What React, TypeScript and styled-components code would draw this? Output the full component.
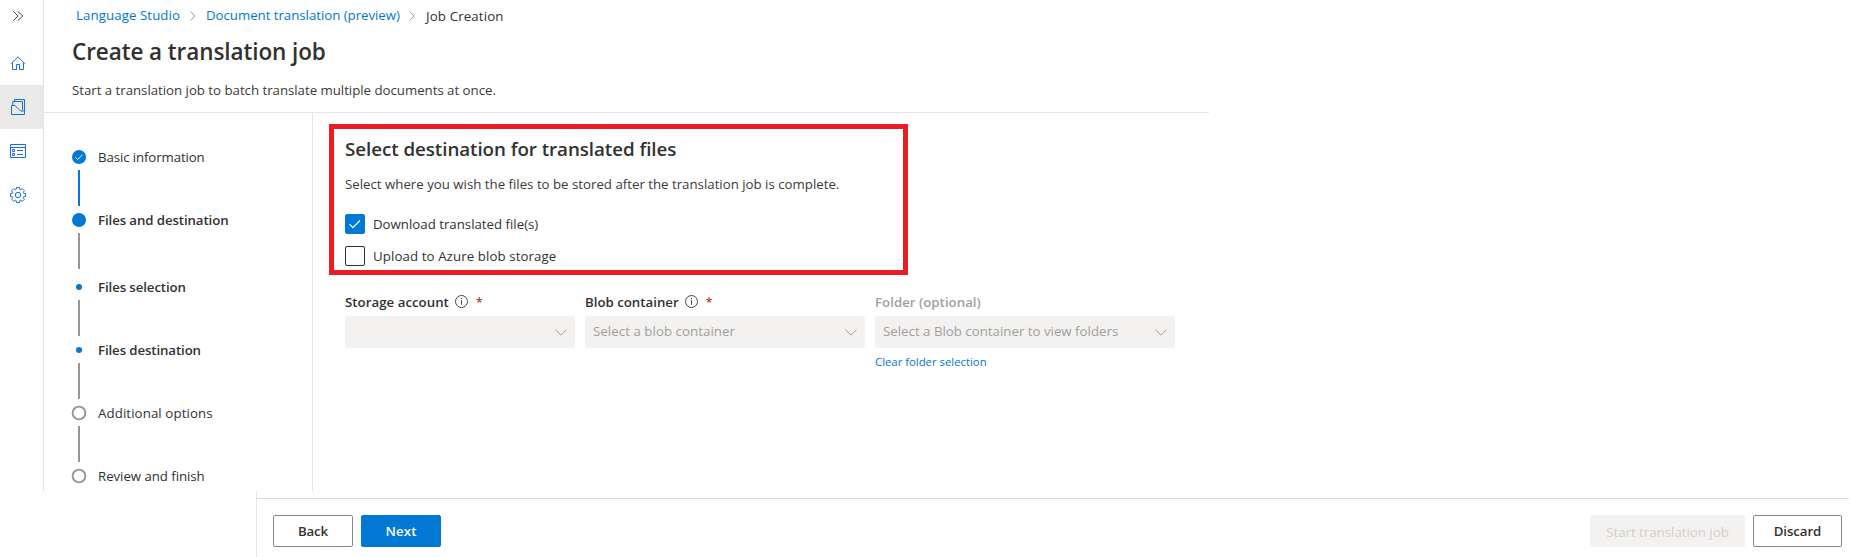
import React from 'react';
import styled, { createGlobalStyle, css } from 'styled-components';

const blue = '#0078d4';
const ink = '#323130';
const hairline = '#e6e6e6';

const GlobalStyle = createGlobalStyle`
  *, *::before, *::after { box-sizing: border-box; }
  body {
    margin: 0;
    background: #fff;
    color: ${ink};
    font: 400 13.25px/20px "Open Sans", "Segoe UI", sans-serif;
    overflow: hidden;
  }
  svg { display: block; flex: none; }
  h1, h2, p { margin: 0; }
`;

const Screen = styled.div`
  display: flex;
  flex-direction: column;
  width: 1850px;
  height: 557px;
`;

const Workspace = styled.div`
  display: flex;
  height: 491px;
`;

const Rail = styled.nav`
  width: 44px;
  flex: none;
  border-right: 1px solid ${hairline};
`;

const RailToggle = styled.button`
  display: flex;
  align-items: center;
  width: 43px;
  height: 32px;
  margin: 0 0 9px;
  padding: 0 0 0 8px;
  border: 0;
  background: none;
`;

const RailItem = styled.a<{ $active?: boolean }>`
  display: flex;
  align-items: center;
  height: 44px;
  padding-left: 8px;
  background: ${p => (p.$active ? '#ebeae9' : 'transparent')};
`;

const Main = styled.main`
  display: flex;
  flex-direction: column;
  flex: 1;
`;

const Header = styled.header`
  width: 1165px;
  height: 113px;
  padding: 5px 0 0 28px;
  border-bottom: 1px solid ${hairline};
`;

const Breadcrumb = styled.div`
  display: flex;
  height: 21px;
  margin-left: 4px;
`;

const Crumb = styled.a<{ $width: number; $track: number }>`
  width: ${p => p.$width}px;
  letter-spacing: ${p => p.$track}px;
  color: ${blue};
  white-space: nowrap;
`;

const CurrentCrumb = styled.span`
  padding: 1px 0 0 1px;
  letter-spacing: 0.15px;
`;

const CrumbChevron = styled.svg`
  margin: 6px 9px 0 9px;
`;

const Title = styled.h1`
  margin-top: 10px;
  font-size: 22.5px;
  font-weight: 600;
  line-height: 32px;
  letter-spacing: -0.09px;
`;

const Subtitle = styled.p`
  margin-top: 12px;
  letter-spacing: -0.02px;
  color: #3b3a39;
`;

const Body = styled.div`
  display: flex;
  flex: 1;
`;

const Steps = styled.div`
  width: 269px;
  flex: none;
  padding: 34px 0 0 28px;
  border-right: 1px solid ${hairline};
`;

const Step = styled.div<{ $bold?: boolean; $track: number }>`
  display: flex;
  align-items: center;
  height: 20px;
  font-weight: ${p => (p.$bold ? 600 : 400)};
  letter-spacing: ${p => p.$track}px;
`;

const Marker = styled.span`
  display: flex;
  align-items: center;
  justify-content: center;
  width: 14px;
  margin-right: 12px;
`;

const Disc = styled.span<{ $size: number }>`
  width: ${p => p.$size}px;
  height: ${p => p.$size}px;
  border-radius: 50%;
  background: ${blue};
`;

const Connector = styled.div<{ $done?: boolean; $gap?: number }>`
  width: 2px;
  height: 36px;
  margin: 3px 0 ${p => p.$gap ?? 4}px 6px;
  background: ${p => (p.$done ? blue : '#979593')};
`;

const Content = styled.section`
  padding: 11px 0 0 16px;
`;

const Highlight = styled.div`
  width: 579px;
  height: 151px;
  padding: 6px 0 0 11px;
  border: 5px solid #ed1c24;
`;

const SectionTitle = styled.h2`
  font-size: 18.75px;
  font-weight: 600;
  line-height: 28px;
  letter-spacing: -0.05px;
`;

const SectionText = styled.p`
  margin: 11px 0 20px;
  color: #3b3a39;
`;

const CheckRow = styled.label<{ $track?: number }>`
  display: flex;
  height: 20px;
  margin-bottom: 12px;
  letter-spacing: ${p => p.$track ?? 0}px;
`;

const CheckBox = styled.span<{ $checked?: boolean }>`
  display: flex;
  align-items: center;
  justify-content: center;
  width: 20px;
  height: 20px;
  margin-right: 8px;
  border: 1px solid ${p => (p.$checked ? blue : ink)};
  border-radius: 2px;
  background: ${p => (p.$checked ? blue : '#fff')};
`;

const Fields = styled.div`
  display: flex;
  gap: 10px;
  padding: 17px 0 0 16px;
`;

const Field = styled.div<{ $width: number }>`
  width: ${p => p.$width}px;
`;

const FieldLabel = styled.div<{ $disabled?: boolean; $track?: number }>`
  display: flex;
  height: 20px;
  margin-bottom: 4px;
  font-weight: 600;
  letter-spacing: ${p => p.$track ?? 0}px;
  color: ${p => (p.$disabled ? '#a19f9d' : ink)};
`;

const InfoIcon = styled.svg`
  margin: 3px 8px 0 6px;
`;

const Required = styled.span`
  padding-top: 1px;
  font-size: 12px;
  color: #b3353b;
`;

const Select = styled.div<{ $track?: number }>`
  display: flex;
  align-items: center;
  justify-content: space-between;
  height: 32px;
  padding: 0 8px 2px;
  border-radius: 2px;
  background: #f3f2f1;
  color: #a19f9d;
  letter-spacing: ${p => p.$track ?? 0}px;
`;

const SelectChevron = styled.svg`
  margin: 2px 0 0 auto;
`;

const ClearLink = styled.a`
  display: block;
  margin-top: 6px;
  font-size: 11.35px;
  line-height: 16px;
  letter-spacing: -0.01px;
  color: ${blue};
`;

const Footer = styled.footer`
  height: 66px;
  margin: 0 1px 0 256px;
  padding-top: 7px;
  border-left: 1px solid ${hairline};
`;

const Actions = styled.div`
  display: flex;
  gap: 8px;
  padding: 16px 7px 0 16px;
  border-top: 1px solid #dcdcdc;
`;

const Spacer = styled.span`
  flex: 1;
`;

const Button = styled.button<{ $width: number; $kind?: 'primary' | 'disabled'; $track?: number }>`
  width: ${p => p.$width}px;
  height: 32px;
  padding: 0;
  border: 1px solid #8a8886;
  border-radius: 2px;
  background: #fff;
  color: ${ink};
  font: inherit;
  font-weight: 600;
  letter-spacing: ${p => p.$track ?? 0}px;
  ${p =>
    p.$kind === 'primary' &&
    css`
      border-color: ${blue};
      background: ${blue};
      color: #fff;
    `}
  ${p =>
    p.$kind === 'disabled' &&
    css`
      padding-top: 1px;
      border-color: #f3f2f1;
      background: #f3f2f1;
      color: #d2d0ce;
      font-weight: 400;
    `}
`;

const Icon = ({ children, color = '#1a6fd6' }: { children: React.ReactNode; color?: string }) => (
  <svg width="20" height="20" viewBox="0 0 20 20" fill="none" stroke={color} strokeWidth="1">
    {children}
  </svg>
);

const gearOutline = Array.from({ length: 8 }, (_, tooth) =>
  [
    [-0.3, 5.9],
    [-0.2, 7.7],
    [0.2, 7.7],
    [0.3, 5.9],
  ]
    .map(([offset, radius]) => {
      const angle = (tooth * Math.PI) / 4 + offset;
      return `${(10 + radius * Math.sin(angle)).toFixed(2)},${(10 - radius * Math.cos(angle)).toFixed(2)}`;
    })
    .join(' '),
).join(' ');

const Separator = () => (
  <CrumbChevron width="8" height="10" viewBox="0 0 8 10" fill="none" stroke="#a19f9d">
    <path d="M1.5 .5 6 5 1.5 9.5" />
  </CrumbChevron>
);

const Ring = () => (
  <svg width="14" height="14" viewBox="0 0 14 14" fill="none" stroke="#979593" strokeWidth="1.9" overflow="visible">
    <circle cx="7" cy="7" r="6.4" />
  </svg>
);

const Info = () => (
  <InfoIcon width="13" height="13" viewBox="0 0 13 13" fill="none" stroke="#484644">
    <circle cx="6.5" cy="6.5" r="6" />
    <path d="M6.5 5.2v4.5M6.5 3v1.2" />
  </InfoIcon>
);

const Caret = () => (
  <SelectChevron width="12" height="7" viewBox="0 0 12 7" fill="none" stroke="#a19f9d">
    <path d="m.4.6 5.6 5.6L11.6.6" />
  </SelectChevron>
);

export default function App() {
  return (
    <Screen>
      <GlobalStyle />
      <Workspace>
        <Rail>
          <RailToggle aria-label="Expand navigation">
            <Icon color="#4a4846">
              <path d="m5.4 5.4 4.6 4.6-4.6 4.6M10 5.4l4.6 4.6-4.6 4.6" />
            </Icon>
          </RailToggle>
          <RailItem aria-label="Home">
            <Icon>
              <path d="m3 10.8 7-7 7 7M4.5 9.5v7h4v-5h3v5h4v-7" />
            </Icon>
          </RailItem>
          <RailItem $active aria-label="Documents">
            <Icon>
              <path d="M3.5 8.5H7l5.5 5.5h4v3.5h-13zM4.8 8.5v-4h9.7v9M6.5 4.5v-2h10V14" />
            </Icon>
          </RailItem>
          <RailItem aria-label="Jobs">
            <Icon>
              <path d="M2.5 3.5h15v13h-15zM2.5 6.5h15M9 9.5h6M9 13.5h6M4.5 8.5h2v2h-2zM4.5 12.5h2v2h-2z" />
            </Icon>
          </RailItem>
          <RailItem aria-label="Settings">
            <Icon>
              <polygon points={gearOutline} strokeLinejoin="round" />
              <circle cx="10" cy="10" r="2.7" />
            </Icon>
          </RailItem>
        </Rail>
        <Main>
          <Header>
            <Breadcrumb>
              <Crumb $width={104} $track={0.09}>Language Studio</Crumb>
              <Separator />
              <Crumb $width={193} $track={-0.03}>Document translation (preview)</Crumb>
              <Separator />
              <CurrentCrumb>Job Creation</CurrentCrumb>
            </Breadcrumb>
            <Title>Create a translation job</Title>
            <Subtitle>Start a translation job to batch translate multiple documents at once.</Subtitle>
          </Header>
          <Body>
            <Steps>
              <Step $track={-0.11}>
                <Marker>
                  <svg width="14" height="14" viewBox="0 0 14 14" fill="none">
                    <circle cx="7" cy="7" r="7" fill={blue} />
                    <path d="m3.4 7.2 2.3 2.3 4.8-4.8" stroke="#fff" />
                  </svg>
                </Marker>
                Basic information
              </Step>
              <Connector $done />
              <Step $bold $track={-0.1}>
                <Marker><Disc $size={14} /></Marker>
                Files and destination
              </Step>
              <Connector $gap={8} />
              <Step $bold $track={-0.1}>
                <Marker><Disc $size={6} /></Marker>
                Files selection
              </Step>
              <Connector />
              <Step $bold $track={-0.11}>
                <Marker><Disc $size={6} /></Marker>
                Files destination
              </Step>
              <Connector />
              <Step $track={0.1}>
                <Marker><Ring /></Marker>
                Additional options
              </Step>
              <Connector />
              <Step $track={-0.05}>
                <Marker><Ring /></Marker>
                Review and finish
              </Step>
            </Steps>
            <Content>
              <Highlight>
                <SectionTitle>Select destination for translated files</SectionTitle>
                <SectionText>
                  Select where you wish the files to be stored after the translation job is complete.
                </SectionText>
                <CheckRow>
                  <CheckBox $checked>
                    <svg width="14" height="14" viewBox="0 0 14 14" fill="none" stroke="#fff" strokeWidth="1.2">
                      <path d="m1.5 7.2 3.4 3.4 7.1-7.1" />
                    </svg>
                  </CheckBox>
                  Download translated file(s)
                </CheckRow>
                <CheckRow $track={0.1}>
                  <CheckBox />
                  Upload to Azure blob storage
                </CheckRow>
              </Highlight>
              <Fields>
                <Field $width={230}>
                  <FieldLabel $track={0.03}>
                    Storage account <Info />
                    <Required>*</Required>
                  </FieldLabel>
                  <Select>
                    <Caret />
                  </Select>
                </Field>
                <Field $width={280}>
                  <FieldLabel>
                    Blob container <Info />
                    <Required>*</Required>
                  </FieldLabel>
                  <Select $track={0.06}>
                    Select a blob container
                    <Caret />
                  </Select>
                </Field>
                <Field $width={300}>
                  <FieldLabel $disabled $track={0.02}>Folder (optional)</FieldLabel>
                  <Select $track={0.01}>
                    Select a Blob container to view folders
                    <Caret />
                  </Select>
                  <ClearLink>Clear folder selection</ClearLink>
                </Field>
              </Fields>
            </Content>
          </Body>
        </Main>
      </Workspace>
      <Footer>
        <Actions>
          <Button $width={80} $track={-0.15}>Back</Button>
          <Button $width={80} $kind="primary" $track={0.1}>Next</Button>
          <Spacer />
          <Button $width={155} $kind="disabled" disabled>Start translation job</Button>
          <Button $width={89} $track={-0.08}>Discard</Button>
        </Actions>
      </Footer>
    </Screen>
  );
}
